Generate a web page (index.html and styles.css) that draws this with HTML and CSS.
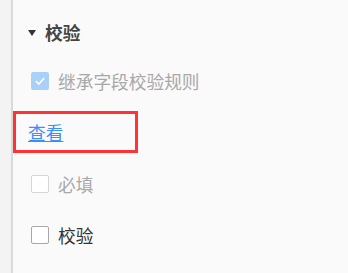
FILE: index.html
```html
<!DOCTYPE html>
<html lang="zh-CN">
<head>
    <meta charset="UTF-8">
    <meta name="viewport" content="width=device-width, initial-scale=1.0">
    <title>校验</title>
    <link rel="stylesheet" href="styles.css">
</head>
<body>
    <div class="panel">
        <!-- Section header -->
        <div class="section-title">
            <span class="caret"></span>
            <span>校验</span>
        </div>

        <label class="check-row disabled first">
            <span class="box checked">
                <svg viewBox="0 0 18 18" width="18" height="18"><path d="M4.8 9.2 L7.8 12 L13.2 6" fill="none" stroke="#fff" stroke-width="1.6"/></svg>
            </span>
            <span>继承字段校验规则</span>
        </label>

        <div class="link-box">
            <a href="#" class="view-link">查看</a>
        </div>

        <label class="check-row disabled second">
            <span class="box light"></span>
            <span>必填</span>
        </label>

        <label class="check-row third">
            <span class="box"></span>
            <span>校验</span>
        </label>
    </div>
</body>
</html>
```
FILE: styles.css
```css
html {
     background: #f3f3f3;
}

body {
     margin: 0;
     padding: 0;
     font-family: "Noto Sans CJK SC", "Noto Sans", sans-serif;
     font-size: 17.7px;
     color: #333;
}

.panel {
     margin-left: 11px;
     border-left: 2px solid #d9d9d9;
     background: #fafafa;
     height: 273px;
     box-sizing: border-box;
}

.section-title {
     height: 64px;
     display: flex;
     align-items: center;
     padding-left: 15px;
     font-weight: bold;
     color: #444;
}

.caret {
     flex-shrink: 0;
     width: 0;
     height: 0;
     border-left: 4.5px solid transparent;
     border-right: 4.5px solid transparent;
     border-top: 6px solid #333;
     margin-right: 9px;
     margin-top: 1px;
}

.check-row {
     height: 34px;
     display: flex;
     align-items: center;
     padding-left: 18px;
}

.check-row.disabled {
     color: #a8a8a8;
}

.check-row.second {
     margin-top: 14px;
}

.check-row.third {
     margin-top: 17px;
}

.box {
     flex-shrink: 0;
     width: 18px;
     height: 18px;
     box-sizing: border-box;
     border: 1.5px solid #a8a8a8;
     border-radius: 2px;
     background: #fff;
     margin-right: 9px;
     display: flex;
}

.box.light {
     border-color: #d6d6d6;
}

.box.checked {
     border: none;
     background: #a9d0f8;
}

.link-box {
     margin-top: 13px;
     width: 125px;
     height: 42px;
     box-sizing: border-box;
     border: 3px solid #ff3333;
     display: flex;
     align-items: center;
     padding-left: 12px;
}

.view-link {
     color: #3b8cff;
     text-decoration: underline;
}
```
